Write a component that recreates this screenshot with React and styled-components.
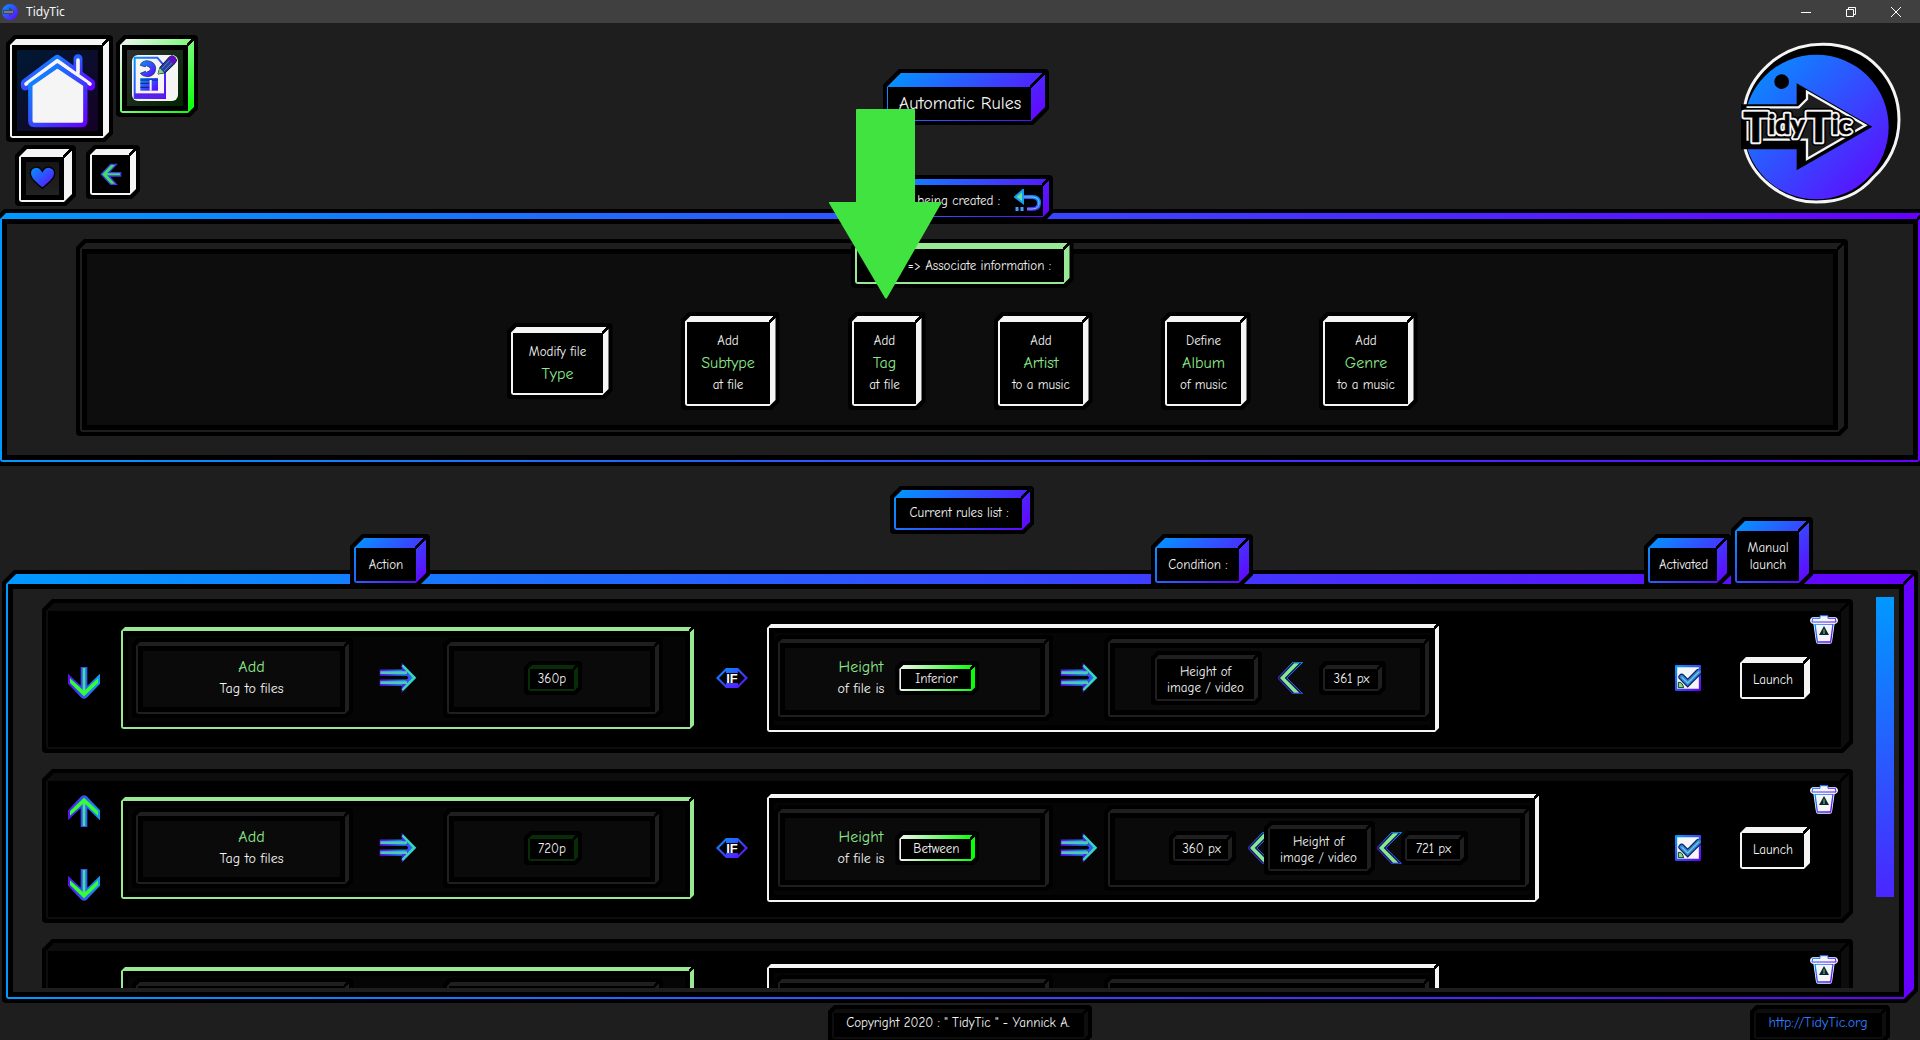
import React from "react";
import styled, { createGlobalStyle, css } from "styled-components";

const color = {
  page: "#1e1e1e",
  white: "#f5f5f5",
  green: "#98e894",
  greenText: "#8ce88c",
  dark: "#0d0d0d",
  rim: "#1f1f1f",
  blue: "#0099ff",
  violet: "#6600ff",
};
const brand = `linear-gradient(135deg, ${color.blue}, ${color.violet})`;
const brandWide = `linear-gradient(90deg, ${color.blue}, ${color.violet})`;
const lime = `linear-gradient(135deg, ${color.white}, #00ff00)`;
const limeWide = `linear-gradient(90deg, ${color.white}, #00ff00)`;

const Global = createGlobalStyle`
  * { box-sizing: border-box; }
  html, body { margin: 0; background: ${color.page}; }
  body {
    color: ${color.white};
    font: 13px/22px "Comic Sans MS", "Comic Neue", "Noto Sans", sans-serif;
    overflow: hidden;
  }
  button { border: 0; background: none; color: inherit; font: inherit; cursor: pointer; }
  svg { display: block; flex: none; }
  h1, h2, h3, p { margin: 0; font: inherit; }
`;

const chamfer = (size) =>
  `polygon(0 ${size}px, ${size}px 0, 100% 0, 100% calc(100% - ${size}px), calc(100% - ${size}px) 100%, 0 100%)`;

/* Extruded block: black outline, painted top and right sides, black face. */
const block = css`
  --d: ${(p) => p.$depth ?? 6}px;
  --e: ${(p) => p.$edge ?? 2}px;
  --i: ${(p) => p.$inset ?? 0}px;
  position: relative;
  isolation: isolate;
  &::before,
  &::after {
    content: "";
    position: absolute;
    z-index: -2;
    inset: 0;
    border-radius: 4px;
    background: #000;
    clip-path: ${(p) => chamfer((p.$depth ?? 6) + 2)};
  }
  &::after {
    z-index: -1;
    inset: 4px;
    border-radius: 3px;
    clip-path: ${(p) => chamfer(p.$depth ?? 6)};
    background:
      linear-gradient(135deg, transparent calc(50% - 2px), #000 calc(50% - 2px), #000 calc(50% + 1px), transparent calc(50% + 1px))
        right top / calc(var(--d) + 1px) calc(var(--d) + 1px) no-repeat,
      ${(p) => p.$fill && css`
        linear-gradient(${p.$fill})
          calc(var(--e) + var(--i)) calc(var(--d) + var(--i)) /
          calc(100% - var(--e) - var(--d) - 2 * var(--i)) calc(100% - var(--e) - var(--d) - 2 * var(--i)) no-repeat,
      `}
      linear-gradient(#000, #000) var(--e) var(--d) /
        calc(100% - var(--e) - var(--d)) calc(100% - var(--e) - var(--d)) no-repeat,
      ${(p) => p.$paint};
  }
`;

const Page = styled.div`
  display: flex;
  flex-direction: column;
  height: 100vh;
  overflow: hidden;
  position: relative;
`;

const TitleBar = styled.header`
  display: flex;
  align-items: center;
  height: 23px;
  flex: none;
  padding: 0 2px;
  background: #404040;
  font: 12px/22px "Noto Sans", sans-serif;
`;
const WindowName = styled.span`
  flex: 1;
  padding-left: 8px;
`;
const WindowButton = styled.button`
  display: grid;
  place-items: center;
  width: 45px;
  height: 21px;
  padding: 0;
`;

const Top = styled.div`
  display: grid;
  grid-template-columns: 1fr auto 1fr;
  height: 186px;
  flex: none;
  position: relative;
  z-index: 1;
`;
const Nav = styled.nav`
  display: flex;
  flex-direction: column;
  gap: 3px;
  padding: 12px 0 0 6px;
`;
const NavRow = styled.div`
  display: flex;
  align-items: flex-start;
  gap: ${(p) => p.$gap}px;
  padding-left: ${(p) => p.$indent ?? 0}px;
`;
const NavButton = styled.button`
  ${block}
  width: ${(p) => p.$size}px;
  height: ${(p) => p.$size}px;
  padding: calc(var(--d) + 4px) calc(var(--d) + 4px) 6px 6px;
  display: grid;
  place-items: center;
`;
const Center = styled.div`
  display: flex;
  flex-direction: column;
  align-items: center;
  padding-top: 46px;
  gap: 50px;
`;
const Title = styled.h1`
  ${block}
  margin-left: 12px;
  padding: 24px 28px 10px 16px;
  font-size: 18px;
  line-height: 22px;
`;
const Creating = styled.h2`
  ${block}
  display: flex;
  align-items: center;
  justify-content: flex-end;
  gap: 14px;
  width: 186px;
  height: 46px;
  padding: 10px 11px 4px 16px;
  white-space: nowrap;
`;
const IconButton = styled.button`
  padding: 0;
`;
const LogoSlot = styled.div`
  justify-self: end;
  padding: 18px 19px 0 0;
`;

const Builder = styled.section`
  ${block}
  flex: none;
  margin: 0 -8px 0 -4px;
  padding: 30px 80px;
`;
const Choices = styled.div`
  ${block}
  display: flex;
  flex-direction: column;
  align-items: center;
  gap: 24px;
  height: 197px;
`;
const GreenLabel = styled.h3`
  ${block}
  width: 223px;
  padding: 16px 10px 11px 6px;
  text-align: center;
  white-space: nowrap;
`;
const Tiles = styled.div`
  display: flex;
  align-items: center;
  gap: 68px;
`;
const Tile = styled.button`
  ${block}
  display: flex;
  flex-direction: column;
  align-items: center;
  width: ${(p) => p.$width}px;
  padding: 18px 10px 14px 6px;
  white-space: nowrap;
`;
const Key = styled.span`
  color: ${color.greenText};
  font-size: 16px;
`;

const ListLabel = styled.h2`
  ${block}
  flex: none;
  align-self: center;
  width: 144px;
  margin: 20px 0 0 4px;
  padding: 16px 12px 10px 6px;
  text-align: center;
`;
const Tabs = styled.div`
  display: grid;
  grid-template-columns: 801px 1fr auto auto;
  align-items: end;
  justify-items: start;
  flex: none;
  margin: -17px 0;
  padding: 0 107px 0 350px;
  position: relative;
  z-index: 1;
`;
const Tab = styled.h3`
  ${block}
  width: ${(p) => p.$width}px;
  padding: 22px 14px 14px 6px;
  line-height: 17px;
  text-align: center;
`;
const ListPanel = styled.section`
  ${block}
  display: flex;
  flex: 1;
  min-height: 0;
  margin: 0 2px;
  padding: 23px 24px 15px 40px;
`;
const List = styled.ul`
  display: flex;
  flex-direction: column;
  gap: 16px;
  flex: 1;
  margin: 0;
  padding: 6px 0 0;
  overflow: hidden;
  list-style: none;
`;
const ScrollTrack = styled.div`
  width: 18px;
  margin-left: 23px;
  padding-top: 4px;
`;
const ScrollThumb = styled.div`
  height: 300px;
  background: linear-gradient(${color.blue}, #4b26ff);
`;

const Row = styled.li`
  ${block}
  display: flex;
  align-items: center;
  flex: none;
  height: 154px;
  padding: 12px 39px 8px 26px;
`;
const Movers = styled.div`
  display: flex;
  flex-direction: column;
  gap: 42px;
  width: 32px;
  margin-right: 17px;
  padding-top: ${(p) => (p.$single ? 10 : 0)}px;
`;
const Clause = styled.div`
  ${block}
  display: flex;
  align-items: center;
  flex: none;
  height: ${(p) => p.$height}px;
  padding: 0 ${(p) => p.$end}px 0 ${(p) => p.$start}px;
`;
const Slot = styled.div`
  ${block}
  display: flex;
  align-items: center;
  justify-content: center;
  gap: ${(p) => p.$gap ?? 0}px;
  width: ${(p) => p.$width}px;
  height: ${(p) => p.$height}px;
  padding: 0 ${(p) => p.$outdent ?? 0}px 0 ${(p) => p.$indent ?? 0}px;
`;
const Between = styled.div`
  display: grid;
  place-items: center;
  width: ${(p) => p.$width}px;
`;
const Compare = styled.div`
  margin: 0 ${(p) => p.$after}px 0 ${(p) => p.$before}px;
`;
const Phrase = styled.p`
  display: flex;
  flex-direction: column;
  align-items: center;
  font-size: 14px;
  white-space: nowrap;
`;
const Pill = styled.div`
  ${block}
  width: ${(p) => p.$width}px;
  padding: 9px 8px 7px 6px;
  line-height: ${(p) => (p.$tall ? 16 : 18)}px;
  text-align: center;
  white-space: nowrap;
  ${(p) => p.$tall && "padding-top: 13px; padding-bottom: 9px;"}
`;
const IfSlot = styled.div`
  margin: 0 15px 0 18px;
`;
const Check = styled.label`
  position: relative;
  margin: 0 35px 0 auto;
  input {
    position: absolute;
    inset: 0;
    width: 26px;
    height: 26px;
    margin: 0;
    opacity: 0;
  }
`;
const Launch = styled.button`
  ${block}
  width: 78px;
  height: 50px;
  padding: 10px 10px 6px 6px;
`;
const Trash = styled.button`
  position: absolute;
  top: 15px;
  right: 15px;
  padding: 0;
`;

const Footer = styled.footer`
  display: grid;
  grid-template-columns: 1fr auto 1fr;
  flex: none;
  height: 37px;
  padding: 2px 30px 0;
`;
const FooterBox = styled.div`
  ${block}
  grid-column: ${(p) => p.$column};
  justify-self: ${(p) => (p.$column === 3 ? "end" : "center")};
  width: ${(p) => p.$width}px;
  height: 38px;
  padding: 7px 10px 0 6px;
  text-align: center;
  white-space: nowrap;
  a { color: #2f7dff; font-size: 14px; text-decoration: none; }
`;
const Pointer = styled.svg`
  position: absolute;
  z-index: 2;
  top: 109px;
  left: calc(50% - 131px);
`;

const Defs = styled.svg`
  position: absolute;
`;

const Gradients = () => (
  <Defs width="0" height="0" aria-hidden="true">
    <defs>
      <linearGradient id="brand" x1="0" y1="0" x2="1" y2="1">
        <stop offset="0" stopColor="#0099ff" />
        <stop offset="1" stopColor="#6600ff" />
      </linearGradient>
      <linearGradient id="flow" x1="0" y1="0" x2="1" y2="0">
        <stop offset="0" stopColor="#5a12f0" />
        <stop offset="1" stopColor="#109cf5" />
      </linearGradient>
      <linearGradient id="rise" x1="0" y1="1" x2="1" y2="0">
        <stop offset="0" stopColor="#6600ff" />
        <stop offset="1" stopColor="#0099ff" />
      </linearGradient>
    </defs>
  </Defs>
);

const HomeIcon = () => (
  <svg width="81" height="81" viewBox="51 150 243 243">
    <g fill="none" strokeLinejoin="round" strokeLinecap="round">
      <path d="M76 258V250L172 178L272 250V258M234 220V176" stroke="#001040" strokeWidth="32" />
      <path d="M76 258V250L172 178L272 250V258M234 220V176" stroke="url(#brand)" strokeWidth="27" />
      <path d="M78 252L172 182L270 252M234 218V180" stroke="#f5f5f5" strokeWidth="11" />
      <path d="M91 254L172 198L256 254V362Q256 375 243 375H104Q91 375 91 362Z" fill="#f5f5f5" stroke="url(#brand)" strokeWidth="13" />
    </g>
  </svg>
);
const RulesIcon = () => (
  <svg width="56" height="56" viewBox="381 150 168 168">
    <rect x="396" y="165" width="138" height="138" rx="18" fill="#f5f5f5" />
    <path d="M404 173H472L495 200V294H404Z" fill="#f5f5f5" stroke="url(#brand)" strokeWidth="6" />
    <path d="M404 280H495V294H404Z" fill="#5b20e8" />
    <path d="M421 196Q424 183 441 182Q466 184 467 206Q466 228 443 230Q426 229 421 220L436 214Q450 216 450 207Q448 196 434 200Z" fill="url(#brand)" stroke="#101c50" strokeWidth="2" />
    <path d="M419 203H438V197L452 207L438 217V211H419Z" fill="#f5f5f5" />
    <path d="M421 234H474V272H421Z" fill="url(#brand)" />
    <path d="M421 240H474M421 250H448M421 262H448" stroke="#182058" strokeWidth="3" />
    <path d="M452 240V272" stroke="#f5f5f5" strokeWidth="6" />
    <path d="M474 222L480 202L508 171Q515 164 524 171Q534 180 526 189L496 218Z" fill="#2b3f9c" stroke="#101030" strokeWidth="3" />
    <path d="M485 206L512 178M492 213L519 185" stroke="#4b7fd8" strokeWidth="3" />
    <path d="M508 171Q515 164 524 171Q534 180 526 189L520 193L503 176Z" fill="#6010c0" />
    <path d="M474 222L479 204L492 218Z" fill="#70dd80" />
  </svg>
);
const HeartIcon = () => (
  <svg width="33" height="33" viewBox="78 486 99 99">
    <path d="M127 565C115 553 91 541 91 520C91 500 116 494 127 514C138 494 164 500 164 520C164 541 139 553 127 565Z" fill="url(#brand)" stroke="#000" strokeWidth="4" />
  </svg>
);
const BackIcon = () => (
  <svg width="22" height="23" viewBox="300 490 66 69">
    <path d="M349 494H332L304 524L332 554H349L326 529H362V519H326Z" fill="#3fdc66" stroke="#4338ee" strokeWidth="4" />
  </svg>
);
const UndoIcon = () => (
  <svg width="28" height="24" viewBox="0 0 28 24" fill="none">
    <path d="M7 8H18Q25 8 25 14Q25 20 18 20H13" stroke="url(#rise)" strokeWidth="4" />
    <path d="M7 8H18Q25 8 25 14Q25 20 18 20H13" stroke="#8cc4f4" strokeWidth="1" />
    <path d="M9 1V14L1 8Z" fill="#68dc9a" stroke="#159cf5" strokeWidth="2" />
    <path d="M3 18V22M8 18V22" stroke="#469cff" strokeWidth="3" />
  </svg>
);
const FlowArrow = () => (
  <svg width="38" height="32" viewBox="0 0 114 96" fill="none">
    <path d="M2 32H84M2 62H84" stroke="url(#flow)" strokeWidth="19" />
    <path d="M68 2L112 47L68 92V70L88 47L68 24Z" fill="url(#flow)" />
    <path d="M4 32H84M4 62H84" stroke="#50c9b4" strokeWidth="8" />
    <path d="M70 10L106 47L70 84" stroke="#35dcae" strokeWidth="7" />
  </svg>
);
const MoveIcon = ({ up }) => (
  <svg width="32" height="32" viewBox="0 0 96 96" fill="none">
    <g transform={up ? "matrix(1 0 0 -1 0 96)" : undefined}>
      <path d="M0 20L38 56V0H58V56L96 20V50L56 92Q48 98 40 92L0 50Z" fill="url(#flow)" />
      <path d="M48 3V76" stroke="#3fe09c" strokeWidth="8" />
      <path d="M6 34L48 72L90 34V48L48 88L6 48Z" fill="#33ff33" />
    </g>
  </svg>
);
const LessThan = () => (
  <svg width="25" height="32" viewBox="0 0 75 96">
    <path d="M44 1H74L27 48L74 95H44L1 50V46Z" fill="#14204a" stroke="url(#rise)" strokeWidth="3" />
    <path d="M48 4H64L20 48L64 92H48L6 48Z" fill="#86e892" />
  </svg>
);
const IfText = styled.text`
  font: 700 13px "Liberation Sans", sans-serif;
  fill: #fff;
`;
const IfIcon = () => (
  <svg width="32" height="20" viewBox="0 0 32 20">
    <path d="M0 10L10 0H22L32 10L22 20H10Z" fill="url(#brand)" />
    <path d="M3 10L10 3V17ZM29 10L22 3V17Z" fill="#000" />
    <path d="M10 5H22L26 10L22 15H10L7 10Z" fill="#000" />
    <IfText x="16" y="15" textAnchor="middle">IF</IfText>
  </svg>
);
const CheckIcon = () => (
  <svg width="26" height="26" viewBox="0 0 78 78">
    <rect x="3" y="3" width="72" height="72" rx="3" fill="#f5f5f5" stroke="url(#brand)" strokeWidth="7" />
    <path d="M10 52Q22 50 26 68H10Z" fill="#7fdc80" stroke="#123a2a" strokeWidth="3" />
    <path d="M20 36L38 54L70 22" fill="none" stroke="#0d1f66" strokeWidth="20" strokeLinecap="round" />
    <path d="M20 36L38 54L72 20" fill="none" stroke="#2b83dc" strokeWidth="13" strokeLinecap="round" />
    <path d="M20 36L38 54L72 20" fill="none" stroke="#74c4d0" strokeWidth="4" />
  </svg>
);
const TrashIcon = () => (
  <svg width="28" height="30" viewBox="0 0 84 90">
    <path d="M10 28H74L66 84Q65 89 60 89H24Q19 89 18 84Z" fill="#fff" />
    <path d="M15 30H69L62 84H22Z" fill="#f5f5f5" stroke="url(#brand)" strokeWidth="4" />
    <rect x="2" y="11" width="80" height="17" rx="7" fill="#f5f5f5" stroke="#fff" strokeWidth="3" />
    <path d="M8 13H30V5H54V13H76L78 24H6L8 13Z" fill="#f5f5f5" stroke="url(#brand)" strokeWidth="3" />
    <path d="M42 36L57 63H27Z" fill="#102038" />
    <path d="M42 46V60" stroke="#48b84c" strokeWidth="4" />
  </svg>
);

const Wordmark = styled.text`
  font-family: "Lato", sans-serif;
  font-weight: 900;
  font-size: ${(p) => p.$size}px;
`;
const wordmark = [
  ["T", 309, 424, 124],
  ["idy", 384, 400, 80],
  ["T", 498, 424, 124],
  ["ic", 574, 400, 80],
];
/* One pass over the wordmark, in the stroke of the layer it draws. */
const Layer = styled.g`
  stroke: ${(p) => p.$stroke};
  stroke-width: ${(p) => p.$weight}px;
  stroke-linejoin: round;
`;
const Letters = ({ stroke, weight, hidden }) => (
  <Layer $stroke={stroke} $weight={weight} aria-hidden={hidden}>
    {wordmark.map(([text, x, y, size]) => (
      <Wordmark key={x} x={x} y={y} $size={size}>{text}</Wordmark>
    ))}
  </Layer>
);
const Logo = () => (
  <svg width="160" height="164" viewBox="302 122 480 492">
    <path
      d="M313 318C326 236 410 132 547 132C690 132 776 244 776 358C776 430 744 490 700 530C650 590 590 605 528 605C420 605 332 524 313 440Z"
      fill="#000"
      stroke="#f5f5f5"
      strokeWidth="9"
      strokeLinejoin="round"
    />
    <circle cx="528" cy="380" r="217" fill="url(#brand)" />
    <path d="M300 312H469V249L696 379L469 510V447H300Z" fill="#000" />
    <path d="M322 321H475L500 296V274L675 375L500 476V418H322Z" fill="#1e1e1e" stroke="#f5f5f5" strokeWidth="7" />
    <circle cx="424" cy="244" r="22" fill="#000" />
    <Letters stroke="#000" weight={24} />
    <Letters stroke="#f5f5f5" weight={14} hidden />
    <Letters stroke="#000" weight={2} hidden />
  </svg>
);
const AppIcon = () => (
  <svg width="16" height="16" viewBox="0 0 16 16">
    <circle cx="8" cy="8" r="8" fill="url(#brand)" />
    <path d="M1 6H7V3L13 8L7 12V10H1Z" fill="#3c4660" />
    <path d="M2 8H11" stroke="#77798c" strokeWidth="2" />
  </svg>
);

const choices = [
  { width: 106, lines: ["Modify file", "Type"] },
  { width: 99, lines: ["Add", "Subtype", "at file"] },
  { width: 78, lines: ["Add", "Tag", "at file"] },
  { width: 99, lines: ["Add", "Artist", "to a music"] },
  { width: 90, lines: ["Define", "Album", "of music"] },
  { width: 99, lines: ["Add", "Genre", "to a music"] },
];
const rules = [
  { tag: "360p", relation: "Inferior", high: "361 px", width: 329, down: true },
  { tag: "720p", relation: "Between", low: "360 px", high: "721 px", width: 429, up: true, down: true },
  { tag: "1080p", relation: "Between", high: "1081 px", width: 329, up: true },
];

const rimmed = { $depth: 4, $inset: 5, $paint: color.rim, $fill: "#0a0a0a, #0a0a0a" };

function Rule({ rule }) {
  return (
    <Row $depth={8} $paint={color.dark}>
      <Movers $single={!(rule.up && rule.down)}>
        {rule.up && <IconButton aria-label="Move up"><MoveIcon up /></IconButton>}
        {rule.down && <IconButton aria-label="Move down"><MoveIcon /></IconButton>}
      </Movers>
      <Clause $depth={4} $paint={color.green} $inset={5} $fill="#050505, #050505" $height={110} $start={15} $end={35}>
        <Slot {...rimmed} $width={221} $height={80} $indent={18}>
          <Phrase><Key>Add</Key>Tag to files</Phrase>
        </Slot>
        <Between $width={90}><FlowArrow /></Between>
        <Slot {...rimmed} $width={220} $height={80}>
          <Pill $depth={4} $paint="#062d06" $width={58}>{rule.tag}</Pill>
        </Slot>
      </Clause>
      <IfSlot><IfIcon /></IfSlot>
      <Clause $depth={4} $paint={color.white} $inset={5} $fill="#050505, #050505" $height={116} $start={11} $end={10}>
        <Slot {...rimmed} $width={279} $height={86} $gap={11} $outdent={10}>
          <Phrase><Key>Height</Key>of file is</Phrase>
          <Pill as="button" $depth={4} $paint={limeWide} $width={84}>{rule.relation}</Pill>
        </Slot>
        <Between $width={51}><FlowArrow /></Between>
        <Slot {...rimmed} $width={rule.width} $height={86}>
          {rule.low && (
            <>
              <Pill $depth={4} $paint={color.rim} $width={67}>{rule.low}</Pill>
              <Compare $before={12} $after={-9}><LessThan /></Compare>
            </>
          )}
          <Pill $depth={4} $paint={color.rim} $width={111} $tall>Height of<br />image / video</Pill>
          <Compare $before={rule.low ? 2 : 16} $after={rule.low ? -1 : 16}><LessThan /></Compare>
          <Pill $depth={4} $paint={color.rim} $width={67}>{rule.high}</Pill>
        </Slot>
      </Clause>
      <Check>
        <input type="checkbox" defaultChecked aria-label="Activated" />
        <CheckIcon />
      </Check>
      <Launch $paint={color.white}>Launch</Launch>
      <Trash aria-label="Delete rule"><TrashIcon /></Trash>
    </Row>
  );
}

export default function App() {
  return (
    <Page>
      <Global />
      <Gradients />
      <TitleBar>
        <AppIcon />
        <WindowName>TidyTic</WindowName>
        <WindowButton aria-label="Minimize">
          <svg width="10" height="10"><path d="M0 5.500H10" stroke="#fff" /></svg>
        </WindowButton>
        <WindowButton aria-label="Restore">
          <svg width="10" height="10" fill="none" stroke="#fff"><path d="M.5 2.500H7.500V9.500H.5ZM2.500 2.500V.5H9.500V7.500H7.500" /></svg>
        </WindowButton>
        <WindowButton aria-label="Close">
          <svg width="10" height="10"><path d="M0 0L10 10M10 0L0 10" stroke="#fff" /></svg>
        </WindowButton>
      </TitleBar>

      <Top>
        <Nav>
          <NavRow $gap={3}>
            <NavButton aria-label="Home" $size={107} $inset={5} $paint={color.white} $fill="135deg, #001a33, #160026"><HomeIcon /></NavButton>
            <NavButton aria-label="Rules" $size={82} $inset={5} $paint={lime} $fill="135deg, #303030, #002600"><RulesIcon /></NavButton>
          </NavRow>
          <NavRow $gap={10} $indent={9}>
            <NavButton aria-label="Favourites" $size={61} $depth={8} $inset={5} $paint={color.white} $fill="#161616, #222222"><HeartIcon /></NavButton>
            <NavButton aria-label="Back" $size={54} $paint={color.white}><BackIcon /></NavButton>
          </NavRow>
        </Nav>
        <Center>
          <Title $depth={14} $edge={1} $paint={brand}>Automatic Rules</Title>
          <Creating $edge={1} $paint={brand}>
            Rule being created :
            <IconButton aria-label="Cancel"><UndoIcon /></IconButton>
          </Creating>
        </Center>
        <LogoSlot><Logo /></LogoSlot>
      </Top>

      <Builder $inset={5} $paint={brandWide} $fill="#1e1e1e, #1e1e1e">
        <Choices $inset={5} $paint={color.page} $fill="#0d0d0d, #0d0d0d">
          <GreenLabel $paint={color.green}>Action =&gt; Associate information :</GreenLabel>
          <Tiles>
            {choices.map(({ width, lines }) => (
              <Tile key={lines.join()} $width={width} $paint={color.white}>
                <span>{lines[0]}</span>
                <Key>{lines[1]}</Key>
                {lines[2] && <span>{lines[2]}</span>}
              </Tile>
            ))}
          </Tiles>
        </Choices>
      </Builder>

      <ListLabel $depth={8} $paint={brand}>Current rules list :</ListLabel>
      <Tabs>
        <Tab $depth={10} $paint={brand} $width={80}>Action</Tab>
        <Tab $depth={10} $paint={brand} $width={102}>Condition :</Tab>
        <Tab $depth={10} $paint={brand} $width={87}>Activated</Tab>
        <Tab $depth={10} $paint={brand} $width={82}>Manual launch</Tab>
      </Tabs>
      <ListPanel $depth={10} $inset={5} $paint={brandWide} $fill="#1e1e1e, #1e1e1e">
        <List>
          {rules.map((rule) => <Rule key={rule.tag} rule={rule} />)}
        </List>
        <ScrollTrack><ScrollThumb /></ScrollTrack>
      </ListPanel>

      <Footer>
        <FooterBox $column={2} $width={264} $depth={4} $paint={color.dark}>Copyright 2020 : &quot; TidyTic &quot; - Yannick A.</FooterBox>
        <FooterBox $column={3} $width={140} $depth={4} $paint={color.dark}><a href="http://TidyTic.org">http://TidyTic.org</a></FooterBox>
      </Footer>

      <Pointer width="114" height="190" viewBox="0 0 114 190" aria-hidden="true">
        <path d="M28 0H85Q86 0 86 1V93H113L58 189Q57 190 56 189L0 94V93H27V1Q27 0 28 0Z" fill="#40e340" />
      </Pointer>
    </Page>
  );
}
